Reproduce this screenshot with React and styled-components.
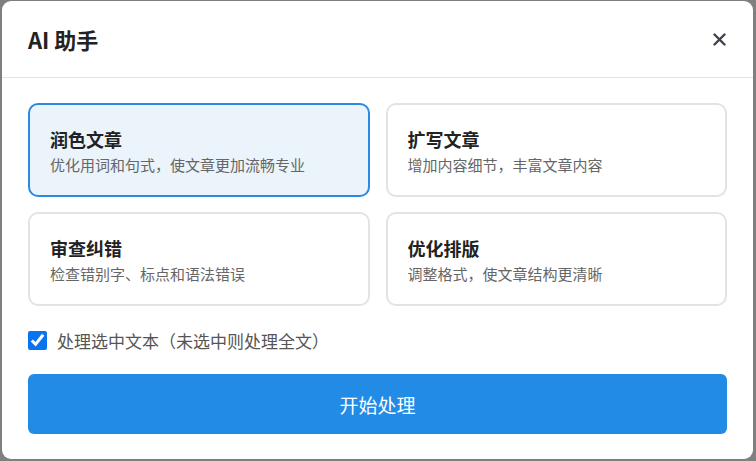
import React, { useState } from "react";
import styled, { createGlobalStyle } from "styled-components";

const Global = createGlobalStyle`
  html, body { margin: 0; padding: 0; height: 100%; }
  body {
    background: #7f7f7f;
    font-family: "Noto Sans CJK SC", "Noto Sans", sans-serif;
    overflow: hidden;
  }
`;

const Overlay = styled.div`
  width: 756px;
  height: 461px;
  padding: 1px 3px 2px 2px;
  box-sizing: border-box;
  display: flex;
`;

const Modal = styled.div`
  flex: 1;
  background: #fff;
  border-radius: 9px;
  display: flex;
  flex-direction: column;
  overflow: hidden;
`;

const Header = styled.div`
  flex-shrink: 0;
  height: 77px;
  box-sizing: border-box;
  padding: 0 26px;
  display: flex;
  align-items: center;
  justify-content: space-between;
  border-bottom: 1px solid #e3e3e3;
`;

const Title = styled.h2`
  margin: 0;
  font-size: 22px;
  font-weight: 600;
  color: #222;
`;

const Close = styled.button`
  border: none;
  background: none;
  padding: 0;
  width: 20px;
  height: 20px;
  display: flex;
  align-items: center;
  justify-content: center;
  cursor: pointer;
  margin-right: -2px;
`;

const Body = styled.div`
  padding: 25px 26px 25px;
  display: flex;
  flex-direction: column;
`;

const Grid = styled.div`
  display: grid;
  grid-template-columns: 1fr 1fr;
  gap: 15px 16px;
`;

const Card = styled.button`
  text-align: left;
  font-family: inherit;
  height: 94px;
  box-sizing: border-box;
  padding: 0 20px;
  border-radius: 10px;
  border: 2px solid ${(p) => (p.$active ? "#2a89e0" : "#e1e3e6")};
  background: ${(p) => (p.$active ? "#ebf3fb" : "#fff")};
  display: flex;
  flex-direction: column;
  justify-content: center;
  gap: 4px;
  cursor: pointer;
`;

const CardTitle = styled.div`
  font-size: 18px;
  font-weight: 700;
  color: #222;
  line-height: 24px;
  margin-top: 2px;
`;

const CardDesc = styled.div`
  font-size: 15px;
  color: #666;
  line-height: 20px;
`;

const CheckRow = styled.label`
  margin-top: 23px;
  height: 22px;
  display: flex;
  align-items: center;
  gap: 10px;
  font-size: 17px;
  color: #555;
  cursor: pointer;
`;

const Check = styled.input`
  width: 19px;
  height: 19px;
  margin: 0;
  accent-color: #0a74f0;
`;

const Primary = styled.button`
  margin-top: 23px;
  height: 60px;
  flex-shrink: 0;
  border: none;
  border-radius: 6px;
  background: #228be6;
  color: #fff;
  font-family: inherit;
  font-size: 19px;
  cursor: pointer;
`;

const options = [
  { t: "润色文章", d: "优化用词和句式，使文章更加流畅专业" },
  { t: "扩写文章", d: "增加内容细节，丰富文章内容" },
  { t: "审查纠错", d: "检查错别字、标点和语法错误" },
  { t: "优化排版", d: "调整格式，使文章结构更清晰" },
];

export default function App() {
  const [sel, setSel] = useState(0);
  const [checked, setChecked] = useState(true);
  return (
    <>
      <Global />
      <Overlay>
        <Modal>
          <Header>
            <Title>AI 助手</Title>
            <Close aria-label="关闭">
              <svg width="13" height="13" viewBox="0 0 13 13">
                <path d="M1.5 1.5L11.5 11.5M11.5 1.5L1.5 11.5" stroke="#3f434a" strokeWidth="2.4" strokeLinecap="round" />
              </svg>
            </Close>
          </Header>
          <Body>
            <Grid>
              {options.map((o, i) => (
                <Card key={o.t} $active={sel === i} onClick={() => setSel(i)}>
                  <CardTitle>{o.t}</CardTitle>
                  <CardDesc>{o.d}</CardDesc>
                </Card>
              ))}
            </Grid>
            <CheckRow>
              <Check type="checkbox" checked={checked} onChange={(e) => setChecked(e.target.checked)} />
              处理选中文本（未选中则处理全文）
            </CheckRow>
            <Primary>开始处理</Primary>
          </Body>
        </Modal>
      </Overlay>
    </>
  );
}
